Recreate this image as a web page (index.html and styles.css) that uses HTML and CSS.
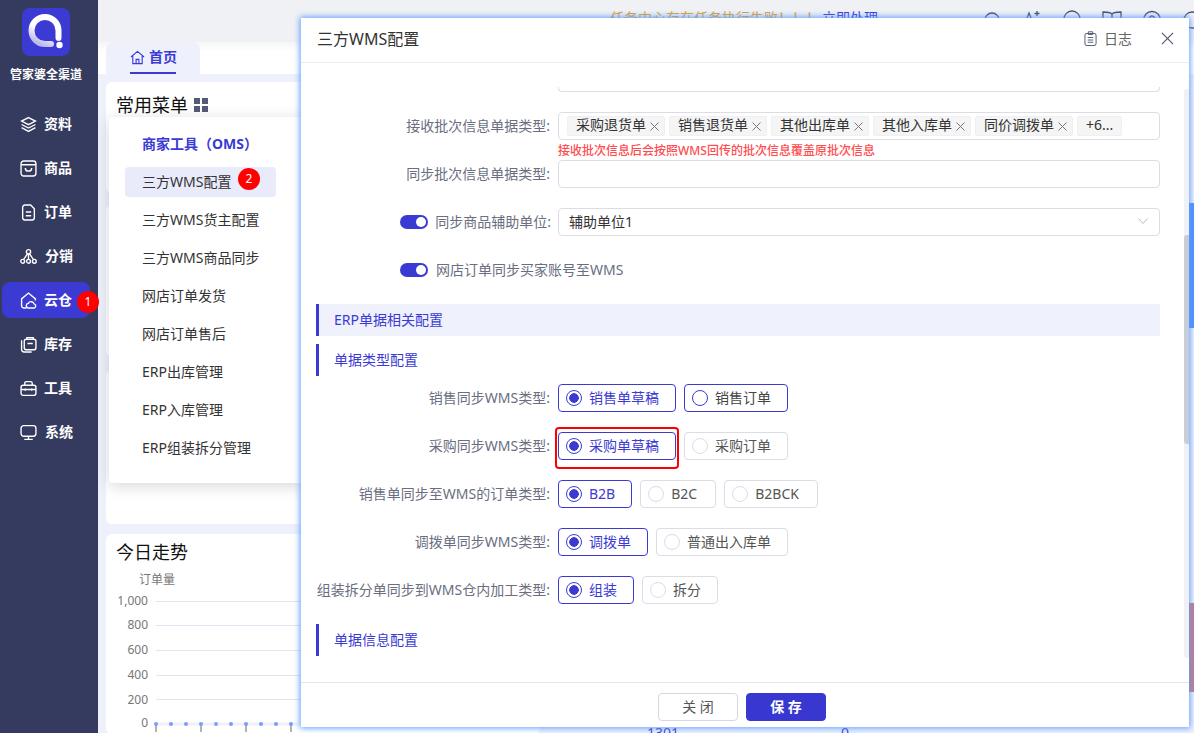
FILE: index.html
```html
<!DOCTYPE html>
<html lang="zh-CN">
<head>
<meta charset="utf-8">
<title>三方WMS配置</title>
<link rel="stylesheet" href="styles.css">
</head>
<body>
<div class="app">
  <aside class="sidebar">
    <div class="logo">
      <svg width="48" height="48" viewBox="0 0 48 48">
        <defs><linearGradient id="lg" x1="0.8" y1="0" x2="0.3" y2="1"><stop offset="0" stop-color="#fff"/><stop offset="0.55" stop-color="#fff"/><stop offset="1" stop-color="#b9b9ee"/></linearGradient></defs>
        <rect width="48" height="48" rx="8" fill="#3b3bd4"/>
        <path d="M29 36H23A13.500 13.500 0 1 1 36.500 22.500V30" fill="none" stroke="url(#lg)" stroke-width="6" stroke-linecap="round"/>
        <circle cx="37.500" cy="37" r="3.200" fill="#fff"/>
      </svg>
    </div>
    <div class="brand">管家婆全渠道</div>
    <nav class="nav">
      <a class="nav-item"><svg class="ico" viewBox="0 0 16 16"><path d="M8 1.500 14.500 4.800 8 8.100 1.500 4.800Z M1.500 8 8 11.300 14.500 8 M1.500 11 8 14.500 14.500 11"/></svg>资料</a>
      <a class="nav-item"><svg class="ico" viewBox="0 0 16 16"><rect x="1" y="1" width="14" height="14" rx="2.500"/><path d="M1 4.500H15 M5 7.500C5 11.500 11 11.500 11 7.500"/></svg>商品</a>
      <a class="nav-item"><svg class="ico" viewBox="0 0 16 16"><path d="M10 1H4.500A2 2 0 0 0 2.500 3V13A2 2 0 0 0 4.500 15H11.500A2 2 0 0 0 13.500 13V4.500Z M5.500 7.500H10.500 M5.500 11H10.500"/></svg>订单</a>
      <a class="nav-item"><svg class="ico" viewBox="0 0 16 16"><circle cx="8" cy="3.500" r="2"/><circle cx="2.500" cy="12.500" r="1.800"/><circle cx="8" cy="12.500" r="1.800"/><circle cx="13.500" cy="12.500" r="1.800"/><path d="M7 5.500 3.500 10.800 M8 5.500V10.700 M9 5.500 12.500 10.800"/></svg><span class="nudge">分销</span></a>
      <a class="nav-item active"><svg class="ico" viewBox="0 0 16 16"><path d="M6 15H3.500A2 2 0 0 1 1.500 13V6.500L8 1 14.500 6.500V8"/><path d="M7.500 15A2.200 2.200 0 0 1 7.800 10.700 3 3 0 0 1 13.300 11.200 2 2 0 0 1 13.500 15Z"/></svg>云仓<span class="badge">1</span></a>
      <a class="nav-item"><svg class="ico" viewBox="0 0 16 16"><path d="M1.500 4V12.500A2.500 2.500 0 0 0 4 15H11"/><rect x="4" y="3" width="11" height="10" rx="2"/><path d="M6.500 3V1.500H12.500V3 M7 7H12"/></svg>库存</a>
      <a class="nav-item"><svg class="ico" viewBox="0 0 16 16"><rect x="1" y="5" width="14" height="9.500" rx="2"/><path d="M4.500 5V3A1.500 1.500 0 0 1 6 1.500H10A1.500 1.500 0 0 1 11.500 3V5 M1 9H15 M5 8V10 M11 8V10"/></svg>工具</a>
      <a class="nav-item"><svg class="ico" viewBox="0 0 16 16"><rect x="1" y="1.500" width="14" height="10" rx="2.500"/><path d="M4 14.500H12 M8 11.500V14.500"/></svg><span class="nudge">系统</span></a>
    </nav>
  </aside>

  <main class="main">
    <header class="topbar">
      <div class="notice"><span class="notice-warn">任务中心存在任务执行失败！！！</span><span class="notice-link">立即处理</span></div>
      <div class="tools">
        <svg class="tool" viewBox="0 0 20 20"><circle cx="10" cy="10" r="7"/><path d="M15 15 18 18"/></svg>
        <svg class="tool" viewBox="0 0 20 20"><path d="M1 18 7 3 13 18 M3.500 13H10.500 M15 1V6 M12.500 3.500H17.500"/></svg>
        <svg class="tool" viewBox="0 0 20 20"><path d="M2 11V9A8 8 0 0 1 18 9V11"/><rect x="1" y="10" width="4" height="6"/></svg>
        <svg class="tool" viewBox="0 0 20 20"><path d="M10 4V18 M10 4C8 2 4 2 1 2V16C4 16 8 16 10 18 12 16 16 16 19 16V2C16 2 12 2 10 4Z"/></svg>
        <svg class="tool" viewBox="0 0 20 20"><circle cx="10" cy="10" r="8.500"/><path d="M7.500 8A2.500 2.500 0 1 1 10 11V12"/></svg>
        <svg class="tool" viewBox="0 0 20 20"><circle cx="10" cy="10" r="8"/></svg>
      </div>
    </header>
    <div class="tabbar">
      <div class="tab">
        <svg class="tab-ico" viewBox="0 0 16 16"><path d="M1 7.500 8 1.500 15 7.500 M3 6.500V14.500H13V6.500 M6.500 14.500V10H9.500V14.500"/></svg>首页
      </div>
    </div>
    <div class="content">
      <div class="col-left">
        <section class="card card-a">
          <h2 class="card-title">常用菜单<svg class="grid-ico" viewBox="0 0 14 14"><rect width="6" height="6"/><rect x="8" width="6" height="6"/><rect y="8" width="6" height="6"/><rect x="8" y="8" width="6" height="6"/></svg></h2>
        </section>
        <section class="card card-b"></section>
        <section class="card card-c"></section>
        <section class="card card-d">
          <h2 class="card-title">今日走势</h2>
          <svg class="chart" width="328" height="178" viewBox="0 0 328 178">
            <text class="axis-name" x="33" y="29.500">订单量</text>
            <path class="gridlines" d="M50 47.500H328 M50 71.500H328 M50 96.500H328 M50 121.500H328 M50 145.500H328"/>
            <g class="axis">
              <text x="42" y="50.500">1,000</text>
              <text x="42" y="75">800</text>
              <text x="42" y="99.500">600</text>
              <text x="42" y="124.500">400</text>
              <text x="42" y="149.500">200</text>
              <text x="42" y="173">0</text>
            </g>
            <path class="dots-line" d="M50 170H328"/>
            <path class="dots-tick" d="M50 171V178 M95 171V178 M140 171V178 M185 171V178"/>
            <g class="dots-pts">
              <circle cx="50" cy="170" r="2"/><circle cx="65" cy="170" r="2"/><circle cx="80" cy="170" r="2"/><circle cx="95" cy="170" r="2"/><circle cx="110" cy="170" r="2"/><circle cx="125" cy="170" r="2"/><circle cx="140" cy="170" r="2"/><circle cx="155" cy="170" r="2"/><circle cx="170" cy="170" r="2"/><circle cx="185" cy="170" r="2"/>
            </g>
          </svg>
        </section>
      </div>
      <div class="col-right">
        <div class="peek-blue"></div>
        <div class="peek-pink"></div>
        <div class="peek-row"><span>1301</span><span>0</span></div>
      </div>
    </div>
  </main>
</div>

<div class="popover">
  <div class="pop-head">商家工具（OMS）</div>
  <a class="pop-item current">三方WMS配置<span class="badge badge-2">2</span></a>
  <a class="pop-item">三方WMS货主配置</a>
  <a class="pop-item">三方WMS商品同步</a>
  <a class="pop-item">网店订单发货</a>
  <a class="pop-item">网店订单售后</a>
  <a class="pop-item">ERP出库管理</a>
  <a class="pop-item">ERP入库管理</a>
  <a class="pop-item">ERP组装拆分管理</a>
</div>

<div class="modal">
  <div class="modal-head">
    <div class="modal-title">三方WMS配置</div>
    <a class="log">
      <svg class="log-ico" viewBox="0 0 14 16"><rect x="1" y="2.500" width="12" height="13" rx="2"/><rect x="4.500" y="0.800" width="5" height="3" rx="1"/><path d="M4 7H10 M4 9.500H10 M4 12H10"/></svg>日志
    </a>
    <svg class="close" viewBox="0 0 14 14"><path d="M1 1 13 13 M13 1 1 13"/></svg>
  </div>
  <div class="modal-body">
    <div class="clip-select"></div>
    <div class="row first">
      <label class="label">接收批次信息单据类型:</label>
      <div class="control tags">
        <span class="tag">采购退货单<svg class="x" viewBox="0 0 9 9"><path d="M0.500 0.500 8.500 8.500 M8.500 0.500 0.500 8.500"/></svg></span>
        <span class="tag">销售退货单<svg class="x" viewBox="0 0 9 9"><path d="M0.500 0.500 8.500 8.500 M8.500 0.500 0.500 8.500"/></svg></span>
        <span class="tag">其他出库单<svg class="x" viewBox="0 0 9 9"><path d="M0.500 0.500 8.500 8.500 M8.500 0.500 0.500 8.500"/></svg></span>
        <span class="tag">其他入库单<svg class="x" viewBox="0 0 9 9"><path d="M0.500 0.500 8.500 8.500 M8.500 0.500 0.500 8.500"/></svg></span>
        <span class="tag">同价调拨单<svg class="x" viewBox="0 0 9 9"><path d="M0.500 0.500 8.500 8.500 M8.500 0.500 0.500 8.500"/></svg></span>
        <span class="tag more">+6...</span>
      </div>
    </div>
    <div class="hint">接收批次信息后会按照WMS回传的批次信息覆盖原批次信息</div>
    <div class="row">
      <label class="label">同步批次信息单据类型:</label>
      <div class="control"></div>
    </div>
    <div class="row gap20">
      <label class="label plain"><span class="switch"></span>同步商品辅助单位:</label>
      <div class="control select">辅助单位1
        <svg class="chev" viewBox="0 0 10 6"><path d="M0.500 0.500 5 5.500 9.500 0.500"/></svg>
      </div>
    </div>
    <div class="row gap20">
      <label class="label plain switch-only"><span class="switch"></span>网店订单同步买家账号至WMS</label>
    </div>
    <div class="section filled">ERP单据相关配置</div>
    <div class="section sub">单据类型配置</div>

    <div class="row tight">
      <label class="label">销售同步WMS类型:</label>
      <div class="radios">
        <span class="radio on">销售单草稿</span>
        <span class="radio focus">销售订单</span>
      </div>
    </div>
    <div class="row gap20">
      <label class="label">采购同步WMS类型:</label>
      <div class="radios">
        <span class="radio on marked">采购单草稿</span>
        <span class="radio">采购订单</span>
      </div>
    </div>
    <div class="row gap20">
      <label class="label">销售单同步至WMS的订单类型:</label>
      <div class="radios">
        <span class="radio on">B2B</span>
        <span class="radio wide">B2C</span>
        <span class="radio wide">B2BCK</span>
      </div>
    </div>
    <div class="row gap20">
      <label class="label">调拨单同步WMS类型:</label>
      <div class="radios">
        <span class="radio on">调拨单</span>
        <span class="radio">普通出入库单</span>
      </div>
    </div>
    <div class="row gap20">
      <label class="label">组装拆分单同步到WMS仓内加工类型:</label>
      <div class="radios">
        <span class="radio on">组装</span>
        <span class="radio">拆分</span>
      </div>
    </div>
    <div class="section sub gap20">单据信息配置</div>
  </div>
  <div class="scroll-track"><div class="scroll-thumb"></div></div>
  <div class="modal-foot">
    <button class="btn">关 闭</button>
    <button class="btn primary">保 存</button>
  </div>
</div>
</body>
</html>
```
FILE: styles.css
```css
* { box-sizing: border-box; }
html, body { margin: 0; height: 100%; overflow: hidden; }
body {
  width: 1194px;
  height: 733px;
  position: relative;
  font-family: "Noto Sans", "Noto Sans CJK SC", sans-serif;
  font-size: 14px;
  color: #333;
  background: #eef0fc;
}
a { color: inherit; text-decoration: none; }
.app { display: flex; height: 733px; }

/* sidebar */
.sidebar { width: 98px; flex: none; background: #343b5e; color: #fff; padding-top: 8px; display: flex; flex-direction: column; }
.logo { width: 48px; height: 48px; margin-left: 22px; }
.logo svg { display: block; }
.brand { font-size: 12px; font-weight: 700; line-height: 18px; margin-top: 1px; padding: 9px 0 0 10px; white-space: nowrap; }
.nav { margin-top: 22px; display: flex; flex-direction: column; gap: 8px; padding-left: 2px; }
.nav-item { position: relative; display: flex; align-items: center; width: 88px; height: 36px; border-radius: 8px; padding-left: 18px; gap: 7px; font-size: 14px; font-weight: 700; line-height: 20px; }
.nav-item.active { background: #3b3bd4; }
.ico { width: 17px; height: 17px; fill: none; stroke: #fff; stroke-width: 1.300; flex: none; }
.nudge { margin-left: 1px; }
.badge { position: absolute; right: -9px; top: 9px; width: 22px; height: 22px; border-radius: 50%; background: #f00; color: #fff; font-size: 12px; font-weight: 400; line-height: 22px; text-align: center; }

/* main */
.main { flex: 1; min-width: 0; display: flex; flex-direction: column; overflow: hidden; }
.topbar { height: 42px; flex: none; background: #f0f1f4; display: flex; padding-left: 512px; padding-top: 8px; overflow: hidden; }
.notice { width: 400px; flex: none; white-space: nowrap; line-height: 20px; }
.notice-warn { color: #e3a030; }
.notice-link { color: #3b3bd4; margin-left: 2px; }
.tools { display: flex; gap: 20px; margin-left: -28px; padding-top: 2px; flex: none; }
.tool { width: 20px; height: 20px; fill: none; stroke: #4a5070; stroke-width: 1.300; flex: none; }
.tabbar { height: 32px; flex: none; background: linear-gradient(#f6f6f8, #fff 30%); padding-left: 8px; }
.tab { width: 94px; height: 32px; border-radius: 8px 8px 0 0; background: #eef0fc; color: #3b3bd4; font-weight: 700; line-height: 30px; display: flex; gap: 4px; padding-left: 24px; position: relative; }
.tab::after { content: ""; position: absolute; left: 24px; bottom: 0; width: 46px; height: 2px; background: #3b3bd4; }
.tab-ico { width: 15px; height: 15px; margin-top: 8px; fill: none; stroke: #3b3bd4; stroke-width: 1.200; }
.content { flex: 1; min-height: 0; display: flex; padding: 8px 0 0 8px; gap: 10px; overflow: hidden; }
.col-left { width: 434px; flex: none; display: flex; flex-direction: column; }
.card { background: #fff; border-radius: 6px; flex: none; }
.card-a { height: 111px; padding: 11px 10px; }
.card-b { height: 152px; margin-top: 12px; }
.card-c { height: 154px; margin-top: 13px; }
.card-d { height: 200px; margin-top: 10px; padding: 6px 0 0 10px; overflow: hidden; }
.card-title { margin: 0; font-size: 18px; font-weight: 400; line-height: 24px; color: #111; display: flex; align-items: center; gap: 6px; }
.grid-ico { width: 14px; height: 14px; fill: #555a7a; }
.chart { display: block; margin-top: -10px; margin-left: -10px; }
.axis-name { font-size: 12px; fill: #777; }
.gridlines { stroke: #e0e6f1; fill: none; }
.axis text { font-size: 12px; fill: #777; text-anchor: end; }
.dots-line { stroke: #eef2ff; stroke-width: 3; fill: none; }
.dots-tick { stroke: #666; fill: none; }
.dots-pts circle { fill: #7a9cff; }

.col-right { flex: 1; min-width: 0; display: flex; flex-direction: column; }
.peek-blue { width: 5px; height: 125px; align-self: flex-end; margin-top: 121px; background: #4d90fe; flex: none; }
.peek-pink { width: 5px; height: 89px; align-self: flex-end; margin-top: 275px; background: #c87a85; flex: none; }
.peek-row { display: flex; gap: 162px; padding-left: 97px; margin-top: 33px; color: #3b3bd4; line-height: 16px; flex: none; }

/* popover */
.popover { position: absolute; left: 109px; top: 117px; width: 200px; height: 366px; background: #fff; border-radius: 4px; box-shadow: 0 3px 16px rgba(0,0,0,.16); padding: 8px 16px; display: flex; flex-direction: column; gap: 8px; }
.pop-head { height: 30px; line-height: 22px; padding-left: 17px; color: #3b3bd4; font-weight: 700; margin-top: 8px; margin-bottom: -4px; flex: none; }
.pop-item { position: relative; width: 151px; height: 30px; flex: none; border-radius: 4px; padding-left: 17px; line-height: 30px; color: #333; white-space: nowrap; }
.pop-item.current { background: #e9ebfa; }
.badge-2 { left: 113px; right: auto; top: 1px; }

/* modal */
.modal { position: absolute; left: 301px; top: 18px; width: 888px; height: 709px; background: #fff; box-shadow: 0 0 6px 1px #5c9dff; display: flex; flex-direction: column; }
.modal-head { height: 45px; flex: none; border-bottom: 1px solid #ececf0; display: flex; align-items: center; padding: 0 15px 4px 16px; }
.modal-title { font-size: 16px; color: #333; flex: 1; }
.log { display: flex; align-items: center; gap: 7px; color: #666; margin-right: 29px; }
.log-ico { width: 13px; height: 15px; fill: none; stroke: #5f6478; stroke-width: 1.100; }
.close { width: 13px; height: 13px; fill: none; stroke: #555a70; stroke-width: 1.300; }
.modal-body { flex: 1; min-height: 0; overflow: hidden; padding: 24px 29px 0 15px; }
.clip-select { height: 5px; margin-left: 242px; border: 1px solid #dcdce6; border-top: 0; border-radius: 0 0 4px 4px; }
.row { display: flex; align-items: center; gap: 7px; min-height: 28px; }
.row.first { margin-top: 20px; }
.row.gap20 { margin-top: 20px; }
.row.tight { margin-top: 8px; }
.label { width: 235px; flex: none; color: #6a6e80; text-align: right; white-space: nowrap; display: flex; justify-content: flex-end; align-items: center; padding: 0 1px 2px 0; }
.label.plain { padding-right: 0; }
.label.switch-only { width: auto; margin-left: 84px; }
.label.switch-only .switch { margin-right: 8px; }
.switch { width: 28px; height: 14px; border-radius: 7px; background: #3b3bd4; position: relative; margin: 2px 7px 0 0; flex: none; }
.switch::after { content: ""; position: absolute; right: 2px; top: 2px; width: 10px; height: 10px; border-radius: 50%; background: #fff; }
.control { flex: 1; min-width: 0; height: 28px; border: 1px solid #dcdce6; border-radius: 4px; background: #fff; }
.tags { display: flex; align-items: center; gap: 4px; padding-left: 8px; }
.tag { height: 20px; line-height: 18px; background: #f5f5f5; border: 1px solid #f0f0f0; border-radius: 2px; padding: 0 5px 2px 8px; white-space: nowrap; display: flex; align-items: center; color: #333; }
.tag.more { padding: 0 8px 2px; }
.x { width: 9px; height: 9px; margin: 2px 0 0 4px; stroke: #777; fill: none; flex: none; }
.hint { height: 20px; line-height: 21px; margin-left: 242px; font-size: 12px; font-weight: 500; color: #ff4d4f; white-space: nowrap; }
.select { display: flex; align-items: center; justify-content: space-between; padding: 0 11px 2px 10px; color: #333; }
.chev { width: 10px; height: 6px; fill: none; stroke: #bbb; }
.section { height: 32px; line-height: 32px; border-left: 3px solid #3b3bd4; padding-left: 15px; color: #3b3bd4; }
.section.filled { background: #eff1fc; margin-top: 20px; }
.section.sub { margin-top: 8px; }
.section.sub.gap20 { margin-top: 20px; }
.radios { display: flex; gap: 8px; }
.radio { position: relative; height: 28px; display: flex; align-items: center; padding: 0 16px 2px 7px; border: 1px solid #dcdce6; border-radius: 4px; color: #555; white-space: nowrap; }
.radio.wide { padding-right: 18px; }
.radio::before { content: ""; width: 14px; height: 14px; border: 1px solid #dcdce6; border-radius: 50%; margin: 2px 7px 0 0; flex: none; background: #fff; }
.radio.focus { border-color: #3b3bd4; color: #444; }
.radio.focus::before { border-color: #3b3bd4; }
.radio.on { border-color: #3b3bd4; color: #3b3bd4; }
.radio.on::before { border-color: #3b3bd4; background: radial-gradient(circle, #3b3bd4 0 4.500px, #fff 5px); }
.radio.marked::after { content: ""; position: absolute; left: -4px; right: -4px; top: -6px; bottom: -10px; border: 2px solid #f00; border-radius: 4px; pointer-events: none; }
.scroll-track { position: absolute; right: 0; top: 71px; width: 5px; height: 569px; background: #f0f1f4; border-radius: 3px 0 0 3px; }
.scroll-thumb { margin-top: 146px; height: 209px; background: #c9ced6; border-radius: 3px 0 0 3px; }
.modal-foot { height: 45px; flex: none; border-top: 1px solid #e4e4ec; display: flex; justify-content: center; gap: 8px; padding: 10px 6px 0 0; }
.btn { width: 80px; height: 28px; padding: 0; border: 1px solid #d8d8e2; border-radius: 4px; background: #fff; color: #555; font: inherit; line-height: 26px; }
.btn.primary { background: #3838d0; border-color: #3838d0; color: #fff; font-weight: 700; }
```
